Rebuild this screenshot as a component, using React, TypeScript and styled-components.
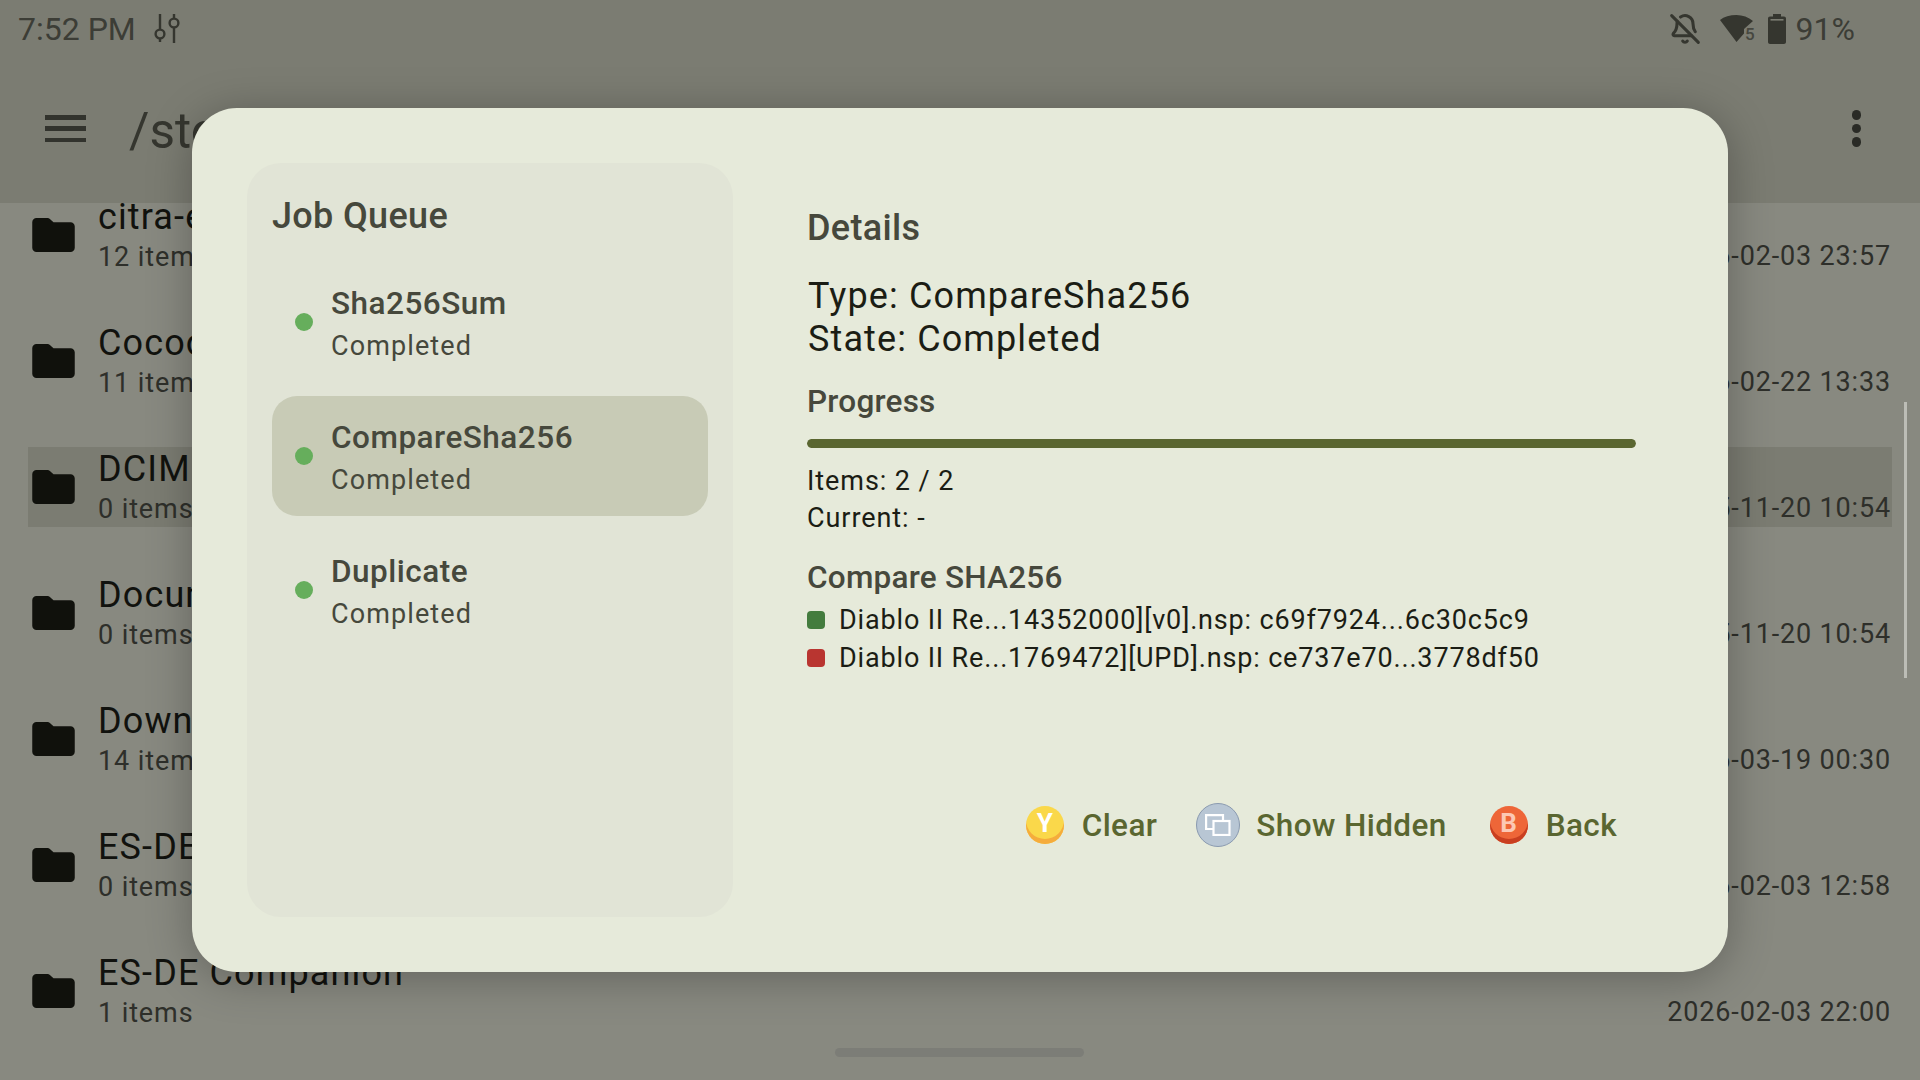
import React from 'react';
import styled, { createGlobalStyle } from 'styled-components';
import { BellOff } from 'lucide-react';

const GlobalStyle = createGlobalStyle`
  html, body {
    margin: 0;
    padding: 0;
    background: #888980;
    font-family: Roboto, "Noto Sans", sans-serif;
  }
  * { box-sizing: border-box; }
`;

const files = [
  { name: 'citra-emu', sub: '12 items', date: '2026-02-03 23:57' },
  { name: 'Cocoon', sub: '11 items', date: '2026-02-22 13:33' },
  { name: 'DCIM', sub: '0 items', date: '2025-11-20 10:54', active: true },
  { name: 'Documents', sub: '0 items', date: '2025-11-20 10:54' },
  { name: 'Download', sub: '14 items', date: '2026-03-19 00:30' },
  { name: 'ES-DE', sub: '0 items', date: '2026-02-03 12:58' },
  { name: 'ES-DE Companion', sub: '1 items', date: '2026-02-03 22:00' },
];

const jobs = [
  { name: 'Sha256Sum', state: 'Completed' },
  { name: 'CompareSha256', state: 'Completed', active: true },
  { name: 'Duplicate', state: 'Completed' },
];

const FolderIcon = () => (
  <FolderSvg viewBox="0 0 20 16" aria-hidden>
    <path
      d="M2 0h5.2c.4 0 .8.2 1.1.5L10 2h8c1.100 0 2 .9 2 2v10c0 1.100-.9 2-2 2H2c-1.100 0-2-.9-2-2V2C0 .9.9 0 2 0z"
      fill="currentColor"
    />
  </FolderSvg>
);

const TuneIcon = () => (
  <svg width="28" height="30" viewBox="0 0 28 30" fill="none" stroke="#35362f" strokeWidth="2.4">
    <path d="M6 0v15.600M6 24.400V28M20 0v4.600M20 13.400V29" />
    <circle cx="6" cy="20" r="4.400" />
    <circle cx="20" cy="9" r="4.400" />
  </svg>
);

const WifiIcon = () => (
  <svg width="36" height="28" viewBox="0 0 36 28">
    <path d="M0 5C4 1.700 10 0 16.500 0 22.500 0 28.500 2 33 6l-9 8v4.500L16.500 27z" fill="#35362f" />
    <text x="25" y="24.500" fontSize="17" fontWeight="500" fontFamily="Roboto, sans-serif" fill="#46473f">
      5
    </text>
  </svg>
);

const BatteryIcon = () => (
  <svg width="18" height="30" viewBox="0 0 18 30">
    <path d="M5 0h8v2.500h3c1.100 0 2 .9 2 2V28c0 1.100-.9 2-2 2H2c-1.100 0-2-.9-2-2V4.500c0-1.100.9-2 2-2h3z" fill="#35362f" />
    <rect x="2.500" y="5" width="13" height="1.600" fill="#7b7c72" />
  </svg>
);

const WindowsIcon = () => (
  <svg width="26" height="22" viewBox="0 0 26 22" fill="none" stroke="#fff" strokeWidth="2.200">
    <path d="M8 15H1.100V1.100H18V7" />
    <rect x="8.500" y="7" width="16" height="14" />
  </svg>
);

export default function App() {
  return (
    <Screen>
      <GlobalStyle />
      <Header>
        <StatusBar>
          <StatusLeft>
            <StatusText>7:52 PM</StatusText>
            <TuneIcon />
          </StatusLeft>
          <StatusRight>
            <BellOff size={32} color="#35362f" strokeWidth={2.3} />
            <WifiSlot>
              <WifiIcon />
            </WifiSlot>
            <BatterySlot>
              <BatteryIcon />
            </BatterySlot>
            <StatusText>91%</StatusText>
          </StatusRight>
        </StatusBar>
        <Toolbar>
          <MenuBars>
            <span />
            <span />
            <span />
          </MenuBars>
          <PathTitle>/storage/emulated/0</PathTitle>
          <MoreDots>
            <span />
            <span />
            <span />
          </MoreDots>
        </Toolbar>
      </Header>

      <FileList>
        {files.map((file) => (
          <FileRow key={file.name} $active={file.active}>
            <FolderIcon />
            <FileText>
              <FileName>{file.name}</FileName>
              <FileSub>{file.sub}</FileSub>
            </FileText>
            <FileDate>{file.date}</FileDate>
          </FileRow>
        ))}
        <ScrollThumb />
      </FileList>

      <HomeBar />

      <Dialog>
        <QueuePanel>
          <QueueTitle>Job Queue</QueueTitle>
          <QueueList>
            {jobs.map((job) => (
              <QueueItem key={job.name} $active={job.active}>
                <StatusDot />
                <JobText>
                  <JobName>{job.name}</JobName>
                  <JobState>{job.state}</JobState>
                </JobText>
              </QueueItem>
            ))}
          </QueueList>
        </QueuePanel>

        <DetailPane>
          <DetailsTitle>Details</DetailsTitle>
          <DetailLines>
            <div>Type: CompareSha256</div>
            <div>State: Completed</div>
          </DetailLines>
          <SectionTitle>Progress</SectionTitle>
          <ProgressTrack>
            <ProgressFill style={{ width: '100%' }} />
          </ProgressTrack>
          <SmallLines>
            <div>Items: 2 / 2</div>
            <div>Current: -</div>
          </SmallLines>
          <CompareTitle>Compare SHA256</CompareTitle>
          <HashRow>
            <HashMark $color="#447c3e" />
            Diablo II Re...14352000][v0].nsp: c69f7924...6c30c5c9
          </HashRow>
          <HashRow>
            <HashMark $color="#b93530" />
            Diablo II Re...1769472][UPD].nsp: ce737e70...3778df50
          </HashRow>
          <Actions>
            <ActionButton>
              <PadButton $face="#fad84a" $side="#f5ac3c" $ink="#ffffff">Y</PadButton>
              Clear
            </ActionButton>
            <ActionButton>
              <SelectButton>
                <WindowsIcon />
              </SelectButton>
              Show Hidden
            </ActionButton>
            <ActionButton>
              <PadButton $face="#ee6638" $side="#c93f20" $ink="#fcc8b4">B</PadButton>
              Back
            </ActionButton>
          </Actions>
        </DetailPane>
      </Dialog>
    </Screen>
  );
}

const Screen = styled.div`
  position: relative;
  width: 1920px;
  height: 1080px;
  overflow: hidden;
  background: #888980;
  display: flex;
  flex-direction: column;
`;

const Header = styled.header`
  flex: 0 0 203px;
  background: #7b7c72;
  position: relative;
  z-index: 1;
`;

const StatusBar = styled.div`
  height: 58px;
  padding: 0 65px 0 18px;
  display: flex;
  align-items: center;
  justify-content: space-between;
`;

const StatusLeft = styled.div`
  display: flex;
  align-items: center;
  gap: 18px;
`;

const StatusRight = styled.div`
  display: flex;
  align-items: center;
`;

const StatusText = styled.span`
  font-size: 32px;
  color: #3c3d36;
`;

const WifiSlot = styled.span`
  display: flex;
  margin: 0 12px 0 19px;
`;

const BatterySlot = styled.span`
  display: flex;
  margin-right: 10px;
`;

const Toolbar = styled.div`
  height: 145px;
  padding: 0 59px 4px 45px;
  display: flex;
  align-items: center;
`;

const MenuBars = styled.div`
  width: 41px;
  height: 27px;
  display: flex;
  flex-direction: column;
  justify-content: space-between;

  span {
    display: block;
    height: 4.5px;
    background: #32332d;
  }
`;

const PathTitle = styled.h1`
  margin: 5px 0 0 43px;
  flex: 1;
  font-size: 49.5px;
  font-weight: 400;
  color: #35362f;
  white-space: nowrap;
`;

const MoreDots = styled.div`
  display: flex;
  flex-direction: column;
  gap: 4px;

  span {
    display: block;
    width: 9.5px;
    height: 9.5px;
    border-radius: 50%;
    background: #2a2b26;
  }
`;

const FileList = styled.main`
  position: relative;
  flex: 1;
  overflow: hidden;
  padding: 0 28px;
  display: flex;
  flex-direction: column;
  gap: 46px;

  & > :first-child {
    margin-top: -8px;
  }
`;

const FileRow = styled.div<{ $active?: boolean }>`
  flex: 0 0 80px;
  min-height: 0;
  display: flex;
  align-items: center;
  background: ${({ $active }) => ($active ? '#7b7c72' : 'transparent')};
`;

const FolderSvg = styled.svg`
  flex: 0 0 43px;
  width: 43px;
  height: 34px;
  margin-left: 4px;
  color: #10110c;
`;

const FileText = styled.div`
  flex: 1;
  margin-left: 23px;
  padding-top: 2px;
`;

const FileName = styled.div`
  font-size: 36px;
  letter-spacing: 1.125px;
  line-height: 42px;
  color: #11120e;
`;

const FileSub = styled.div`
  font-size: 27px;
  letter-spacing: 0.9px;
  line-height: 38px;
  color: #2e2f2a;
`;

const FileDate = styled.div`
  font-size: 27px;
  letter-spacing: 0.84px;
  color: #2e2f2a;
  align-self: flex-end;
  margin: 0 1px 3px 0;
`;

const ScrollThumb = styled.div`
  position: absolute;
  top: 199px;
  left: 1904px;
  width: 3px;
  height: 276px;
  background: #bcbdb6;
`;

const HomeBar = styled.div`
  position: absolute;
  left: 835px;
  top: 1048px;
  width: 249px;
  height: 9px;
  border-radius: 5px;
  background: #7c7d77;
`;

const Dialog = styled.section`
  position: absolute;
  z-index: 2;
  left: 192px;
  top: 108px;
  width: 1536px;
  height: 864px;
  padding: 55px;
  border-radius: 45px;
  background: #e6eada;
  box-shadow: 0 6px 45px rgba(0, 0, 0, 0.28);
  display: flex;
`;

const QueuePanel = styled.aside`
  flex: 0 0 486px;
  padding: 25px;
  border-radius: 34px;
  background: #e1e4d6;
`;

const QueueTitle = styled.h2`
  margin: 7px 0 0;
  font-size: 36px;
  line-height: 42px;
  font-weight: 500;
  letter-spacing: 0.34px;
  color: #46483c;
`;

const QueueList = styled.div`
  margin-top: 25px;
  display: flex;
  flex-direction: column;
  gap: 14px;
`;

const QueueItem = styled.div<{ $active?: boolean }>`
  height: 120px;
  padding-left: 23px;
  border-radius: 25px;
  display: flex;
  align-items: center;
  gap: 18px;
  background: ${({ $active }) => ($active ? '#c8cbb6' : 'transparent')};
`;

const StatusDot = styled.span`
  width: 18px;
  height: 18px;
  border-radius: 50%;
  background: #66ae5c;
`;

const JobText = styled.div`
  padding-top: 7px;
`;

const JobName = styled.div`
  font-size: 31.5px;
  line-height: 41px;
  font-weight: 500;
  letter-spacing: 0.5px;
  color: #46483c;
`;

const JobState = styled.div`
  font-size: 27px;
  line-height: 45px;
  letter-spacing: 1.1px;
  color: #46483c;
`;

const DetailPane = styled.div`
  flex: 1;
  padding: 44px 37px 0 74px;
  position: relative;
  color: #1b1d14;
`;

const DetailsTitle = styled.h2`
  margin: 0;
  font-size: 36px;
  line-height: 42px;
  font-weight: 500;
  letter-spacing: 0.34px;
  color: #46483c;
`;

const DetailLines = styled.div`
  margin: 26px 0 0 1px;
  font-size: 36px;
  line-height: 43px;
  letter-spacing: 1.125px;
`;

const SectionTitle = styled.h3`
  margin: 22px 0 0;
  font-size: 31.5px;
  line-height: 37px;
  font-weight: 500;
  letter-spacing: 0.225px;
  color: #46483c;
`;

const ProgressTrack = styled.div`
  margin-top: 19px;
  height: 9px;
  border-radius: 5px;
  background: #c8cbb6;
  overflow: hidden;
`;

const ProgressFill = styled.div`
  height: 100%;
  border-radius: 5px;
  background: #5a6630;
`;

const SmallLines = styled.div`
  margin-top: 15px;
  font-size: 27px;
  line-height: 37px;
  letter-spacing: 0.93px;
`;

const CompareTitle = styled(SectionTitle)`
  margin: 22px 0 5px;
`;

const HashRow = styled.div`
  margin-top: 1px;
  height: 37px;
  display: flex;
  align-items: center;
  gap: 14px;
  font-size: 27px;
  letter-spacing: 0.84px;
`;

const HashMark = styled.span<{ $color: string }>`
  width: 18px;
  height: 18px;
  border-radius: 4px;
  background: ${({ $color }) => $color};
`;

const Actions = styled.div`
  position: absolute;
  right: 56px;
  top: 640px;
  display: flex;
  align-items: center;
  gap: 39px;
`;

const ActionButton = styled.div`
  display: flex;
  align-items: center;
  gap: 18px;
  font-size: 31.5px;
  font-weight: 500;
  letter-spacing: 0.4px;
  color: #5a6630;

  &:last-child {
    margin-left: 4px;
  }
`;

const PadButton = styled.span<{ $face: string; $side: string; $ink: string }>`
  width: 38px;
  height: 38px;
  padding-bottom: 4px;
  border-radius: 50%;
  background: ${({ $face }) => $face};
  box-shadow: inset 0 -5px 0 ${({ $side }) => $side};
  color: ${({ $ink }) => $ink};
  font-size: 26px;
  font-weight: 700;
  letter-spacing: 0;
  display: flex;
  align-items: center;
  justify-content: center;
`;

const SelectButton = styled.span`
  width: 44px;
  height: 44px;
  border-radius: 50%;
  margin-right: -2px;
  background: #b8c6d4;
  border: 1px solid #8a9ab0;
  display: flex;
  align-items: center;
  justify-content: center;
`;
